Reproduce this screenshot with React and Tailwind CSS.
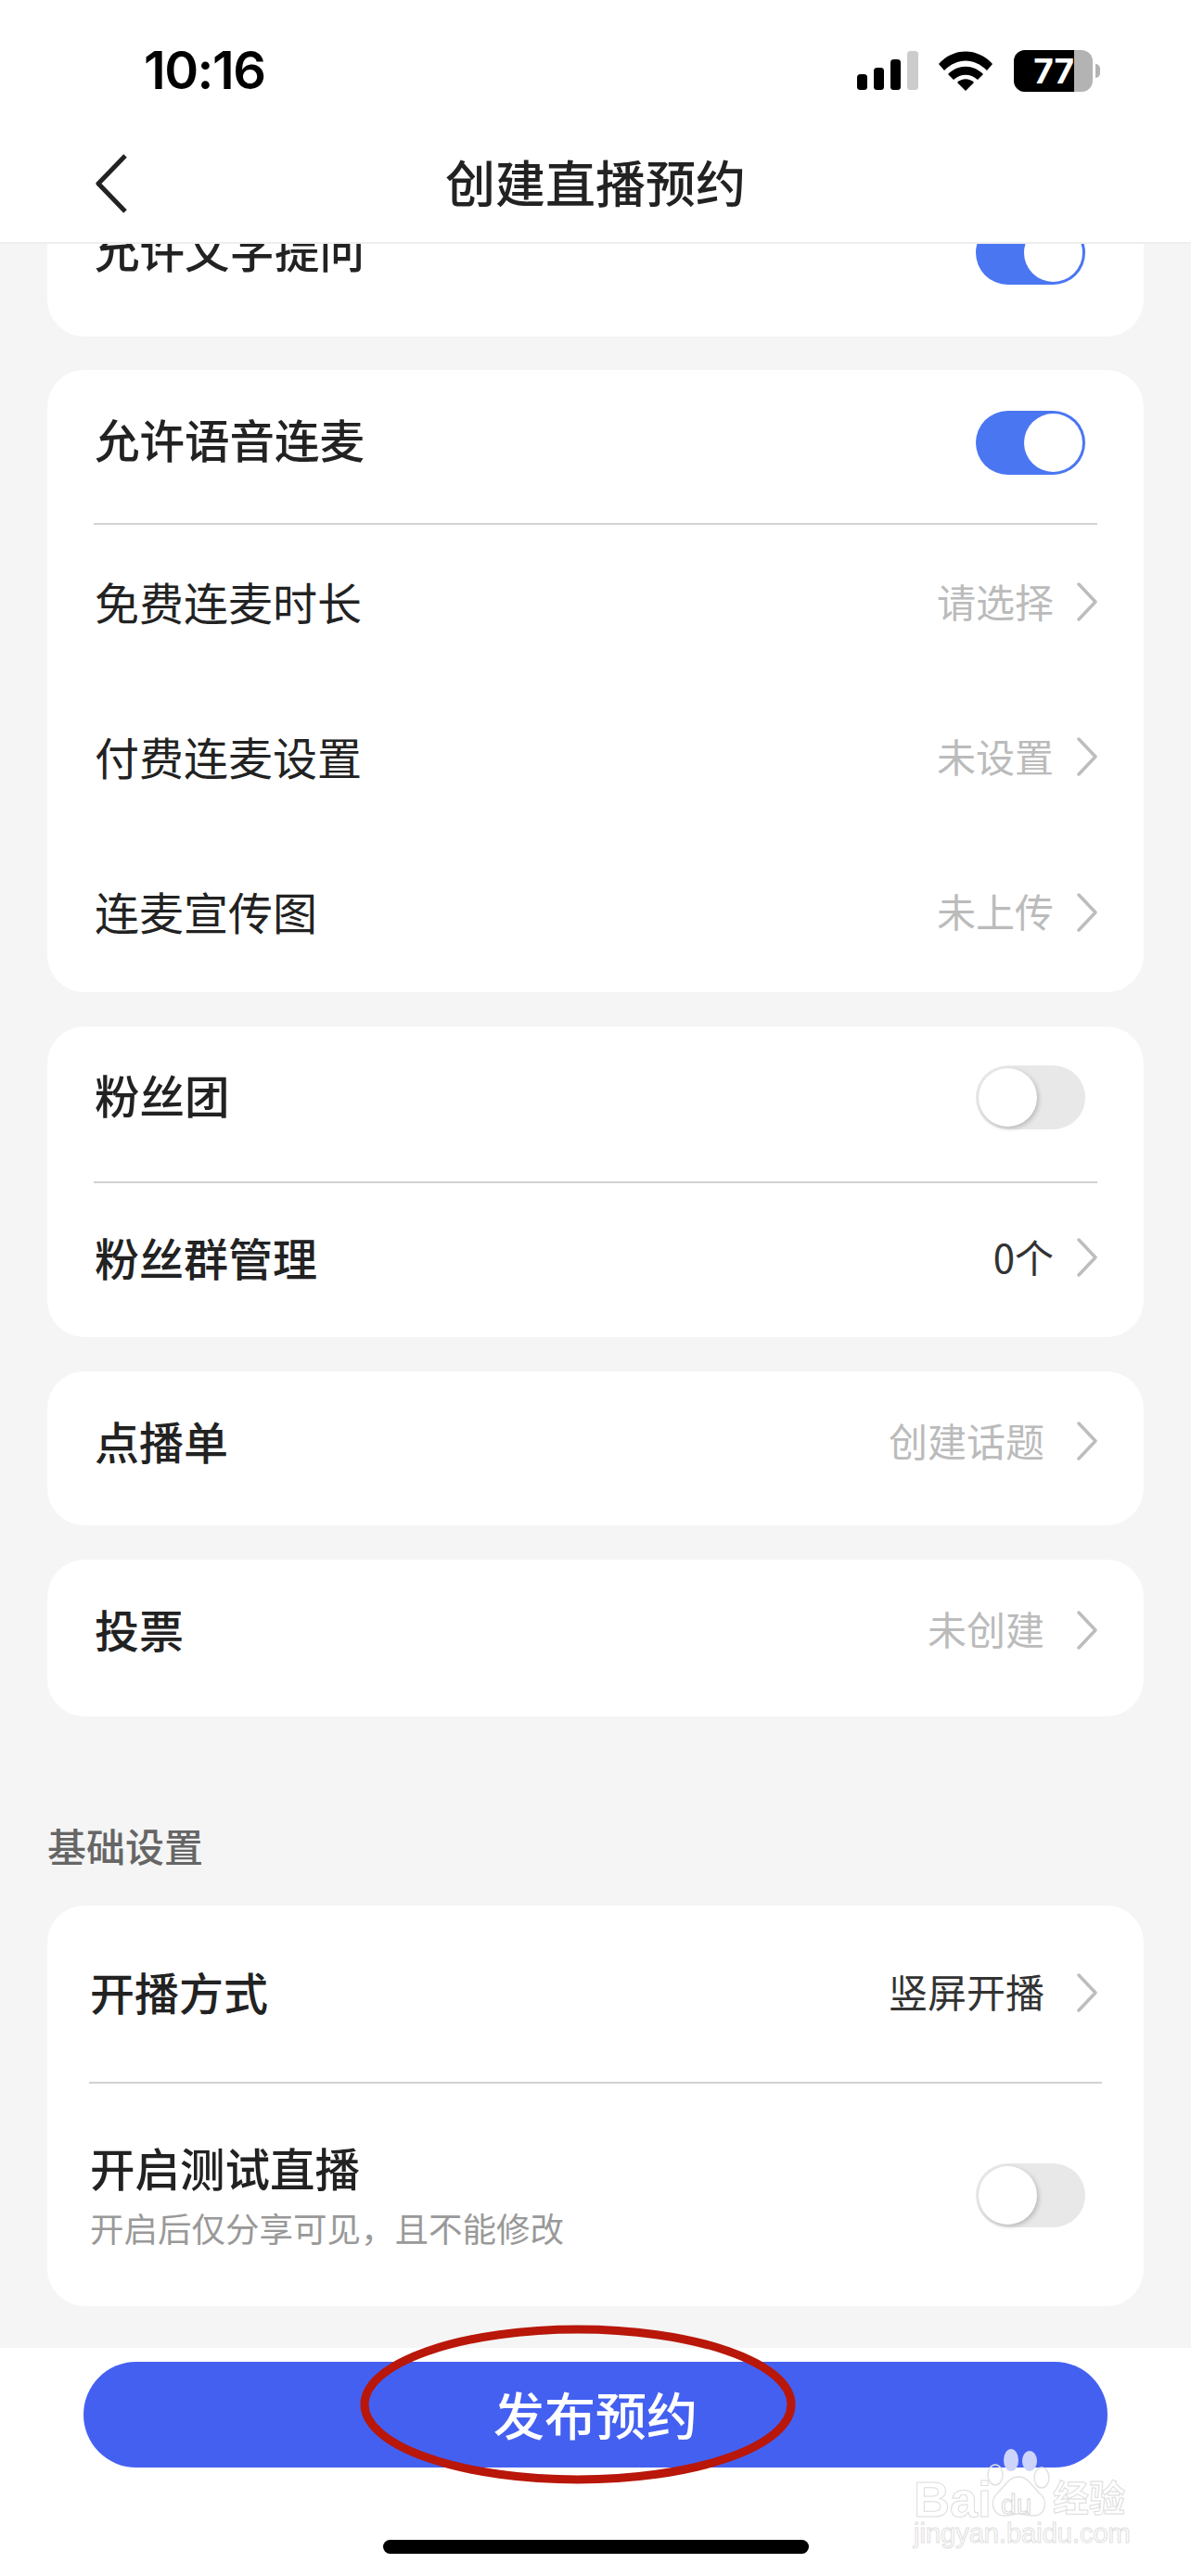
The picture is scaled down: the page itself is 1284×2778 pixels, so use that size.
import React from 'react';

const Chevron = () => (
  <svg width="24" height="42" viewBox="0 0 24 42" fill="none" className="mt-[3px] shrink-0">
    <path d="M3 2 L21 21 L3 40" stroke="#bdbdbd" strokeWidth="3.5" strokeLinecap="round" strokeLinejoin="round" />
  </svg>
);

const Toggle = ({ on }) =>
  on ? (
    <div className="flex h-[69px] w-[118px] shrink-0 items-center justify-end rounded-full bg-[#4a76f2] pr-[3px]">
      <div className="h-[63px] w-[63px] rounded-full bg-white" />
    </div>
  ) : (
    <div className="flex h-[69px] w-[118px] shrink-0 items-center rounded-full bg-[#e8e8e8] pl-[3px]">
      <div className="h-[63px] w-[63px] rounded-full bg-white shadow-[2px_2px_5px_rgba(0,0,0,0.2)]" />
    </div>
  );

const Card = ({ className = '', children }) => (
  <div className={`mx-[51px] rounded-[40px] bg-white ${className}`}>{children}</div>
);

const Divider = ({ className = 'mx-[50px]' }) => <div className={`h-[2px] bg-[#d2d2d2] ${className}`} />;

const ValueRow = ({ label, value, dark, gap = 'gap-[24px]', weight = 'font-normal', className = 'h-[167px] pb-[6px]' }) => (
  <div className={`flex items-center justify-between pl-[51px] pr-[49px] ${className}`}>
    <span className={`text-[48px] leading-none text-[#222222] ${weight}`}>{label}</span>
    <div className={`flex items-center ${gap}`}>
      <span className={`text-[42px] leading-none ${dark ? 'text-[#333333]' : 'text-[#bbbbbb]'}`}>{value}</span>
      <Chevron />
    </div>
  </div>
);

const StatusIcons = () => (
  <div className="flex items-center">
    <svg width="66" height="42" viewBox="0 0 66 42">
      <rect x="0" y="25" width="11" height="17" rx="3.5" fill="#000" />
      <rect x="18" y="18" width="11" height="24" rx="3.5" fill="#000" />
      <rect x="36" y="9" width="11" height="33" rx="3.5" fill="#000" />
      <rect x="54" y="0" width="12" height="42" rx="3.5" fill="#cccccc" />
    </svg>
    <svg width="58" height="43" viewBox="0 0 58 43" className="ml-[22px]">
      <path d="M0 14 C16 -4 42 -4 58 14 L52 21 C38 7 20 7 6 21 Z" fill="#000" />
      <path d="M10 25 C21 14 37 14 48 25 L42 31 C34 24 24 24 16 31 Z" fill="#000" />
      <path d="M20 34 C25 29 33 29 38 34 L29 43 Z" fill="#000" />
    </svg>
    <div className="ml-[23px] flex h-[45px] w-[85px] overflow-hidden rounded-[12px] bg-[#b3b3b3]">
      <div className="flex h-full w-[65px] items-center justify-end bg-black font-['Inter',sans-serif] text-[37px] font-bold leading-none text-white">
        77
      </div>
    </div>
    <div className="ml-[3px] h-[15px] w-[5px] rounded-r-full bg-[#b3b3b3]" />
  </div>
);

const Watermark = () => (
  <div className="pointer-events-none absolute left-[985px] top-[2640px] h-[115px] w-[235px]">
    <svg width="235" height="80" viewBox="0 0 235 80" fill="none" className="absolute left-0 top-0">
      <ellipse cx="105" cy="13" rx="8" ry="12" fill="#ccd4fa" />
      <ellipse cx="125" cy="14" rx="8" ry="11" fill="#ccd4fa" />
      <ellipse cx="88" cy="29" rx="8" ry="11" stroke="#e2e2e2" strokeWidth="1.5" />
      <ellipse cx="138" cy="32" rx="8" ry="11" stroke="#e2e2e2" strokeWidth="1.5" />
      <path d="M113 31 C102 31 98 42 90 49 C82 56 84 73 98 73 C104 73 108 71 113 71 C119 71 123 73 129 73 C143 73 145 56 136 49 C128 42 124 31 113 31 Z" stroke="#e2e2e2" strokeWidth="1.5" />
    </svg>
    <span className="absolute left-[0px] top-[28px] font-['Liberation_Sans',sans-serif] text-[54px] font-bold leading-none text-white [-webkit-text-stroke:1px_#dddddd]">
      Bai
    </span>
    <span className="absolute left-[94px] top-[46px] font-['Liberation_Sans',sans-serif] text-[30px] leading-none text-white [-webkit-text-stroke:1px_#d8d8d8]">
      du
    </span>
    <span className="absolute left-[150px] top-[32px] text-[39px] font-bold leading-none text-white [-webkit-text-stroke:1px_#dddddd]">
      经验
    </span>
    <span className="absolute left-0 top-[78px] font-['Liberation_Sans',sans-serif] text-[29px] leading-none text-white [-webkit-text-stroke:1px_#e0e0e0]">
      jingyan.baidu.com
    </span>
  </div>
);

export default function App() {
  return (
    <div className="relative flex h-[2778px] w-[1284px] flex-col overflow-hidden bg-[#f5f5f5] font-['Noto_Sans_CJK_SC',sans-serif]">
      {/* top bar */}
      <div className="z-10 h-[263px] shrink-0 border-b-2 border-[#eeeeee] bg-white">
        <div className="flex h-[152px] items-center justify-between pl-[155px] pr-[98px]">
          <span className="font-['Inter',sans-serif] text-[56px] font-semibold leading-none tracking-[-1.5px] text-black">10:16</span>
          <StatusIcons />
        </div>
        <div className="grid h-[92px] grid-cols-[1fr_auto_1fr] items-center">
          <svg width="34" height="64" viewBox="0 0 34 64" fill="none" className="ml-[103px]">
            <path d="M32 2 L3 32 L32 62" stroke="#222222" strokeWidth="5" strokeLinejoin="round" />
          </svg>
          <span className="pb-[4px] text-[54px] font-medium leading-none text-[#222222]">创建直播预约</span>
          <div />
        </div>
      </div>

      {/* scrolled settings list */}
      <div className="flex-1 overflow-hidden">
        <Card className="relative -mt-[200px] mb-[36px] h-[300px]">
          <div className="absolute bottom-[56px] left-[51px] right-[63px] flex items-center justify-between">
            <span className="mb-[8px] text-[48.5px] font-medium leading-none text-[#222222]">允许文字提问</span>
            <Toggle on />
          </div>
        </Card>

        <div className="flex flex-col gap-[37px]">
          <Card className="pb-[2px]">
            <div className="flex h-[165px] items-center justify-between pb-[8px] pl-[51px] pr-[63px]">
              <span className="mb-[8px] text-[48.5px] font-medium leading-none text-[#222222]">允许语音连麦</span>
              <Toggle on />
            </div>
            <Divider />
            <ValueRow label="免费连麦时长" value="请选择" className="h-[167px] pb-[4px]" />
            <ValueRow label="付费连麦设置" value="未设置" className="h-[167px] pb-[4px]" />
            <ValueRow label="连麦宣传图" value="未上传" className="h-[168px] pb-[4px]" />
          </Card>

          <Card>
            <div className="flex h-[167px] items-center justify-between pb-[14px] pl-[51px] pr-[63px]">
              <span className="mb-[6px] text-[48.5px] font-medium leading-none text-[#222222]">粉丝团</span>
              <Toggle />
            </div>
            <Divider />
            <ValueRow label="粉丝群管理" value="0个" dark weight="font-medium" className="h-[166px] pb-[9px]" />
          </Card>

          <Card>
            <ValueRow label="点播单" value="创建话题" gap="gap-[34px]" weight="font-medium" className="h-[166px] pb-[19px]" />
          </Card>

          <Card>
            <ValueRow label="投票" value="未创建" gap="gap-[34px]" weight="font-medium" className="h-[169px] pb-[21px]" />
          </Card>
        </div>

        <div className="mb-[37px] ml-[51px] mt-[111px] text-[42px] font-medium leading-[56px] text-[#666666]">基础设置</div>

        <Card>
          <div className="flex h-[190px] items-center justify-between pb-[6px] pl-[46px] pr-[49px]">
            <span className="text-[48px] font-medium leading-none text-[#222222]">开播方式</span>
            <div className="flex items-center gap-[34px]">
              <span className="text-[42px] leading-none text-[#333333]">竖屏开播</span>
              <Chevron />
            </div>
          </div>
          <Divider className="mx-[45px]" />
          <div className="flex h-[240px] items-center justify-between pl-[46px] pr-[63px]">
            <div className="flex flex-col gap-[24px]">
              <span className="text-[48.5px] font-medium leading-none text-[#222222]">开启测试直播</span>
              <span className="text-[36.5px] leading-none text-[#999999]">开启后仅分享可见，且不能修改</span>
            </div>
            <Toggle />
          </div>
        </Card>
      </div>

      {/* publish bar */}
      <div className="h-[246px] shrink-0 bg-white pt-[15px]">
        <div className="mx-[90px] flex h-[114px] items-center justify-center rounded-full bg-[#4460f1] pb-[4px] text-[55px] font-medium leading-none text-white">
          发布预约
        </div>
        <div className="mx-auto mt-[78px] h-[15px] w-[459px] rounded-full bg-black" />
      </div>

      {/* red annotation ring */}
      <svg width="480" height="180" viewBox="0 0 480 180" fill="none" className="absolute left-[384px] top-[2503px]">
        <ellipse cx="239" cy="90" rx="230" ry="81" stroke="#b8170a" strokeWidth="9" />
      </svg>
      <Watermark />
    </div>
  );
}
